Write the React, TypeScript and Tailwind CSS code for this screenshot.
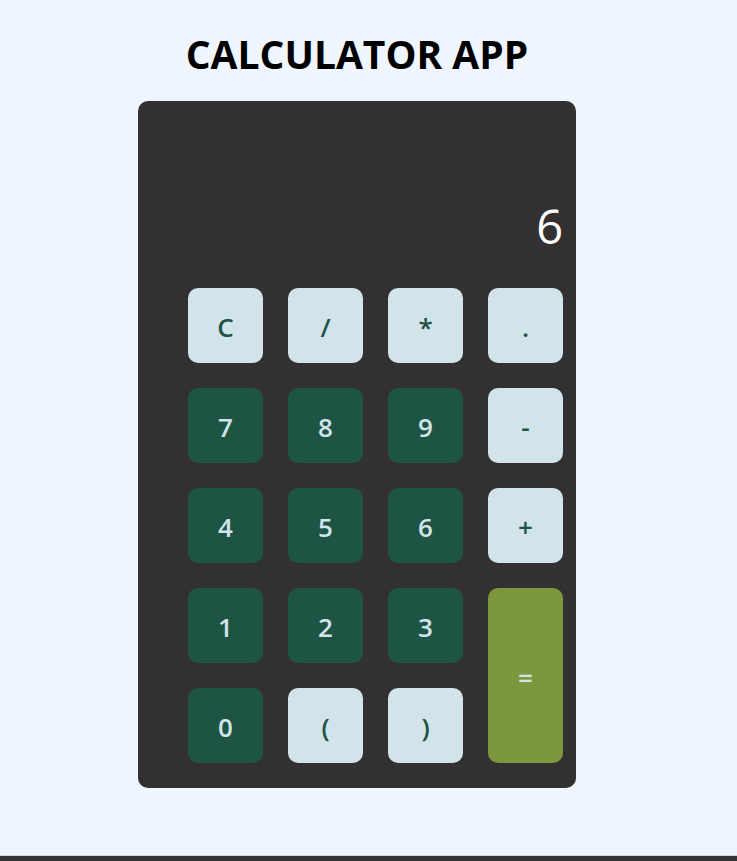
import React from "react";

type Key = { label: string; kind: "op" | "num" | "eq" };

const keys: Key[] = [
  { label: "C", kind: "op" },
  { label: "/", kind: "op" },
  { label: "*", kind: "op" },
  { label: ".", kind: "op" },
  { label: "7", kind: "num" },
  { label: "8", kind: "num" },
  { label: "9", kind: "num" },
  { label: "-", kind: "op" },
  { label: "4", kind: "num" },
  { label: "5", kind: "num" },
  { label: "6", kind: "num" },
  { label: "+", kind: "op" },
  { label: "1", kind: "num" },
  { label: "2", kind: "num" },
  { label: "3", kind: "num" },
  { label: "=", kind: "eq" },
  { label: "0", kind: "num" },
  { label: "(", kind: "op" },
  { label: ")", kind: "op" },
];

const keyStyles = {
  op: "bg-[#d2e3ea] text-[#1e5443]",
  num: "bg-[#1e5443] text-[#d2e3ea]",
  eq: "bg-[#7d973c] text-[#d2e3ea] row-span-2",
};

export default function App() {
  return (
    <div className="min-h-[861px] flex flex-col bg-[#eff6ff] font-['Open_Sans',sans-serif]">
      <div className="flex-1 w-[714px] flex flex-col items-center">
        <h1 className="mt-[28px] mb-[22px] text-[39px] font-bold leading-[51px] text-black">
          CALCULATOR APP
        </h1>
        <div className="w-[438px] rounded-[10px] bg-[#323031] pl-[50px] pr-[13px] pb-[25px]">
          <div className="h-[162px] flex items-end justify-end text-[47px] leading-[52px] text-white pb-[11px]">
            6
          </div>
          <div className="mt-[25px] grid grid-cols-[repeat(4,75px)] auto-rows-[75px] gap-[25px]">
            {keys.map((k) => (
              <button
                key={k.label}
                className={`${keyStyles[k.kind]} rounded-[10px] pt-[3px] text-[26px] font-semibold flex items-center justify-center`}
              >
                {k.label}
              </button>
            ))}
          </div>
        </div>
      </div>
      <div className="h-[6px] border-t border-[#cfd8e0] bg-[#333333]" />
    </div>
  );
}
